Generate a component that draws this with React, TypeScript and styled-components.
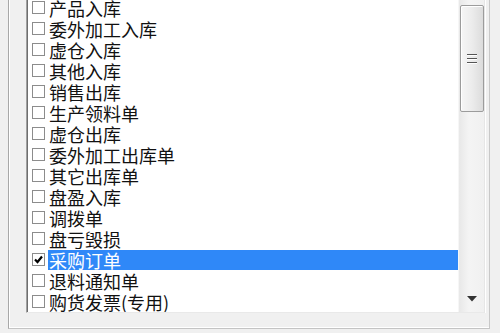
import React from "react";
import styled, { createGlobalStyle } from "styled-components";

const Global = createGlobalStyle`
  html, body { margin: 0; padding: 0; background: #f0f0f0; }
  body { overflow: hidden; }
`;

const Page = styled.div`
  width: 500px;
  height: 333px;
  background: #f0f0f0;
  overflow: hidden;
  display: flex;
  font-family: "Noto Sans CJK SC", "Noto Sans", sans-serif;
`;

const Group = styled.div`
  margin-left: 8px;
  width: 482px;
  height: 329px;
  box-sizing: border-box;
  border-left: 1px solid #a8a8a8;
  border-right: 1px solid #c8c8c8;
  border-bottom: 1px solid #c4c4c4;
  box-shadow: inset 1px 0 #ffffff, inset 0 -1px #ffffff;
  padding: 0 4px 15px 17px;
  display: flex;
`;

const ListBox = styled.div`
  flex: 1;
  display: flex;
  background: #ffffff;
  border-left: 1px solid #a0a0a0;
  border-right: 1px solid #e6e6e6;
  border-bottom: 1px solid #e9e9e9;
  box-shadow: inset 1px 0 #6e6e6e, 1px 0 #ffffff;
  overflow: hidden;
`;

const Items = styled.div`
  flex: 1;
  padding-left: 5px;
  margin-top: -3px;
  display: flex;
  flex-direction: column;
`;

const Row = styled.div`
  height: 21px;
  flex: none;
  display: flex;
  align-items: center;
`;

const Check = styled.span`
  width: 11px;
  height: 11px;
  flex: none;
  border: 1px solid #8c8c8c;
  background: #ffffff;
  margin-right: 3px;
  display: flex;
  align-items: center;
  justify-content: center;
`;

const Label = styled.span<{ $selected?: boolean }>`
  flex: 1;
  height: 20px;
  line-height: 20px;
  padding-left: 1px;
  font-size: 18px;
  white-space: nowrap;
  color: ${(p) => (p.$selected ? "#ffffff" : "#111111")};
  background: ${(p) => (p.$selected ? "#2f88f8" : "transparent")};
`;

const ScrollBar = styled.div`
  width: 26px;
  flex: none;
  display: flex;
  flex-direction: column;
  align-items: center;
  background: linear-gradient(to right, #e8e8e8, #f4f4f4 40%, #f0f0f0);
  border-left: 1px solid #f6f6f6;
  box-sizing: border-box;
`;

const Thumb = styled.div`
  margin-top: 5px;
  width: 24px;
  height: 107px;
  box-sizing: border-box;
  border: 1px solid #9c9c9c;
  border-radius: 2px;
  background: linear-gradient(to right, #f6f6f6, #ececec 50%, #dcdcdc);
  box-shadow: inset 1px 1px #ffffff;
  display: flex;
  flex-direction: column;
  align-items: center;
  justify-content: center;
  gap: 3px;
`;

const Grip = styled.span`
  width: 10px;
  height: 1px;
  background: #555555;
  box-shadow: 0 1px #ffffff;
`;

const Track = styled.div`
  flex: 1;
`;

const DownButton = styled.div`
  height: 23px;
  width: 100%;
  display: flex;
  align-items: flex-start;
  justify-content: center;
  padding-top: 7px;
  box-sizing: border-box;
`;

const items = [
  "产品入库",
  "委外加工入库",
  "虚仓入库",
  "其他入库",
  "销售出库",
  "生产领料单",
  "虚仓出库",
  "委外加工出库单",
  "其它出库单",
  "盘盈入库",
  "调拨单",
  "盘亏毁损",
  "采购订单",
  "退料通知单",
  "购货发票(专用)",
];

export default function App() {
  return (
    <>
      <Global />
      <Page>
        <Group>
          <ListBox>
            <Items>
              {items.map((t) => {
                const sel = t === "采购订单";
                return (
                  <Row key={t}>
                    <Check>
                      {sel && (
                        <svg width="9" height="9" viewBox="0 0 9 9">
                          <polyline
                            points="1,4.5 3.5,7 8,1.5"
                            fill="none"
                            stroke="#000"
                            strokeWidth="2.2"
                          />
                        </svg>
                      )}
                    </Check>
                    <Label $selected={sel}>{t}</Label>
                  </Row>
                );
              })}
            </Items>
            <ScrollBar>
              <Thumb>
                <Grip />
                <Grip />
                <Grip />
              </Thumb>
              <Track />
              <DownButton>
                <svg width="10" height="6" viewBox="0 0 10 6">
                  <polygon points="0,0 10,0 5,5.5" fill="#333" />
                </svg>
              </DownButton>
            </ScrollBar>
          </ListBox>
        </Group>
      </Page>
    </>
  );
}
